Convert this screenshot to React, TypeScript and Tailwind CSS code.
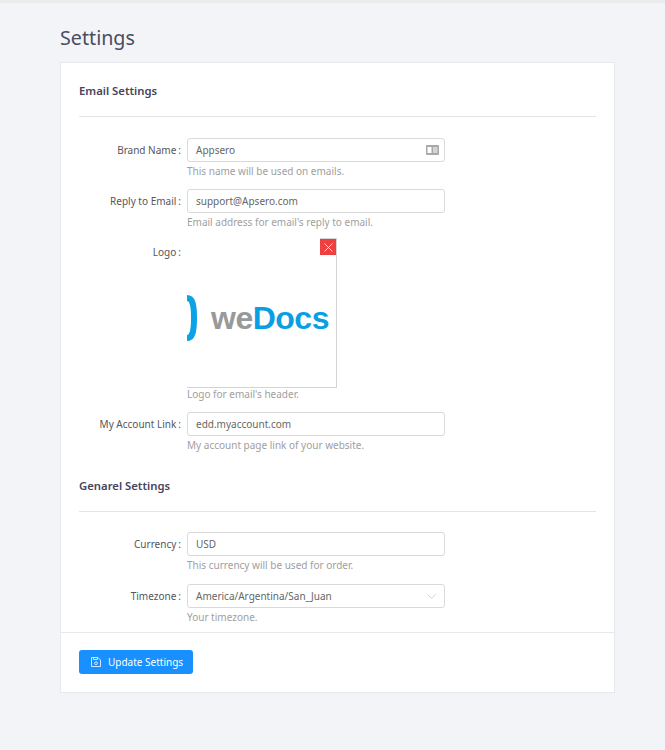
import { ChevronDown, X } from "lucide-react";
import type { ReactNode } from "react";

function Row({ label, help, children, className = "" }: { label: string; help: string; children: ReactNode; className?: string }) {
  return (
    <div className={`flex ${className}`}>
      <label className="w-[108px] shrink-0 h-6 flex items-center justify-end pr-[6px] text-[#55565c]">
        {label}
        <span className="ml-[2px]">:</span>
      </label>
      <div className="w-[258px]">
        {children}
        <p className="h-[27px] leading-[18px] text-[#a0a0a0]">{help}</p>
      </div>
    </div>
  );
}

function TextBox({ value, children }: { value: string; children?: ReactNode }) {
  return (
    <div className="h-6 border border-[#d9d9d9] rounded-[3px] bg-white pl-2 pr-[5px] flex items-center justify-between text-[#666666]">
      <span>{value}</span>
      {children}
    </div>
  );
}

export default function App() {
  return (
    <div className="min-h-[750px] bg-[#f3f4f8] font-['Noto_Sans','Open_Sans',sans-serif] text-[10px]">
      <div className="h-[3px] bg-[#ebebeb]" />
      <div className="pl-[60px] w-[615px]">
        <h1 className="h-[59px] pt-[20px] text-[19.700px] leading-[30px] text-[#4a4d60]">Settings</h1>
        <div className="h-[631px] border border-[#e8e9ec] bg-white flex flex-col">
          <div className="h-[569px] overflow-hidden px-[18px]">
            <h2 className="pt-[18px] h-[54px] border-b border-[#e4e4e4] text-[11.300px] font-semibold leading-[20px] text-[#46435c]">Email Settings</h2>
            <div className="pt-[21px]">
              <Row label="Brand Name" help="This name will be used on emails.">
                <TextBox value="Appsero">
                  <svg width="13" height="10" viewBox="0 0 13 10" className="text-[#a8a8a8]">
                    <rect width="13" height="10" rx="1" fill="currentColor" />
                    <rect x="1.5" y="2" width="4" height="6" fill="white" />
                    <rect x="7" y="2.500" width="4.500" height="1" fill="white" />
                    <rect x="7" y="4.500" width="4.500" height="1" fill="white" />
                    <rect x="7" y="6.500" width="4.500" height="1" fill="white" />
                  </svg>
                </TextBox>
              </Row>
              <Row label="Reply to Email" help="Email address for email's reply to email.">
                <TextBox value="support@Apsero.com" />
              </Row>
              <div className="flex h-[172px]">
                <label className="w-[108px] shrink-0 h-6 flex items-center justify-end pr-[6px] text-[#55565c]">
                  Logo<span className="ml-[2px]">:</span>
                </label>
                <div className="w-[258px] -mt-[2px]">
                  <div className="relative h-[150px] w-[150px] border-r border-b border-[#d4d4d4] overflow-hidden">
                    <svg width="12" height="46" viewBox="0 0 12 46" fill="none" className="absolute left-0 top-[57px]">
                      <path d="M0 3C5 3 7 8 7 23C7 38 5 43 0 43" stroke="#0ba3e6" strokeWidth="6" />
                    </svg>
                    <span className="absolute left-[24px] top-[62px] text-[32px] leading-[36px] font-bold font-['Liberation_Sans',sans-serif] tracking-[-0.5px] text-[#999999]">
                      we<span className="text-[#0a9fe3]">Docs</span>
                    </span>
                    <div className="absolute right-0 top-0 w-4 h-[17px] border-t border-[#d4d4d4] bg-[#ee4040] flex items-center justify-center text-white">
                      <X size={15} strokeWidth={1.25} />
                    </div>
                  </div>
                  <p className="leading-[12px] text-[#a0a0a0]">Logo for email's header.</p>
                </div>
              </div>
              <Row label="My Account Link" help="My account page link of your website.">
                <TextBox value="edd.myaccount.com" />
              </Row>
            </div>
            <h2 className="pt-[13px] h-[49px] border-b border-[#e4e4e4] text-[11.300px] font-semibold leading-[20px] text-[#46435c]">Genarel Settings</h2>
            <div className="pt-[20px]">
              <Row label="Currency" help="This currency will be used for order.">
                <TextBox value="USD" />
              </Row>
              <Row label="Timezone" help="Your timezone." className="mt-px">
                <TextBox value="America/Argentina/San_Juan">
                  <ChevronDown size={15} strokeWidth={1} className="text-[#b5b5b5]" />
                </TextBox>
              </Row>
            </div>
          </div>
          <div className="h-[60px] border-t border-[#e8e9ec] px-[18px] pt-[17px]">
            <button className="h-6 w-[114px] rounded-[3px] bg-[#1890ff] text-white flex items-center pl-3 gap-[7px]">
              <svg width="10" height="10" viewBox="0 0 10 10" fill="none" stroke="#cfe6ff" strokeWidth="1">
                <path d="M.5 .5h6.500l2.500 2.500v6.500h-9z" />
                <path d="M2.500 .5v2h4v-2" />
                <circle cx="5" cy="6.200" r="1.400" />
              </svg>
              Update Settings
            </button>
          </div>
        </div>
      </div>
    </div>
  );
}
